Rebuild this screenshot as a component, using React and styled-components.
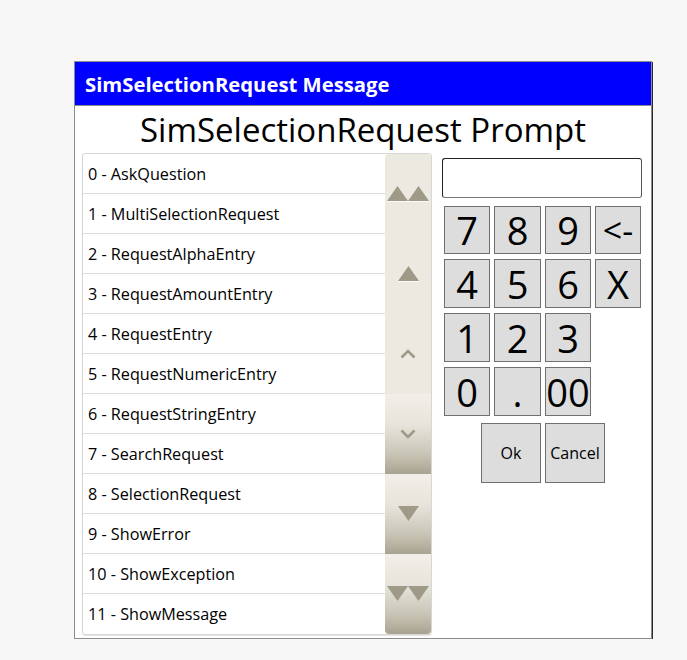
import React from "react";
import styled, { createGlobalStyle } from "styled-components";

const GlobalStyle = createGlobalStyle`
  html, body { margin: 0; padding: 0; background: #f7f7f7; }
  body { font-family: "Open Sans", "Noto Sans", sans-serif; }
`;

const Page = styled.div`
  padding: 61px 0 0 74px;
`;

const Dialog = styled.div`
  width: 576px;
  height: 576px;
  background: #ffffff;
  border: 1px solid #8c8c8c;
  box-shadow: 1px 1px 0 #2a2a2a;
  display: flex;
  flex-direction: column;
`;

const TitleBar = styled.div`
  height: 43px;
  background: #0000ff;
  border-bottom: 1px solid #8c8c8c;
  color: #ffffff;
  font-weight: 700;
  font-size: 20.3px;
  display: flex;
  align-items: center;
  padding-left: 10px;
`;

const Prompt = styled.div`
  height: 47px;
  display: flex;
  align-items: center;
  justify-content: center;
  font-size: 33px;
  color: #000;
`;

const Body = styled.div`
  display: flex;
  padding: 0 0 0 7px;
  gap: 10px;
`;

const List = styled.div`
  width: 348px;
  height: 480px;
  border: 1px solid #d6d6d6;
  border-radius: 3px;
  display: flex;
  box-shadow: 0 1px 1px #e4e4e4;
`;

const Rows = styled.div`
  flex: 1;
  display: flex;
  flex-direction: column;
`;

const Row = styled.div`
  height: 39px;
  border-bottom: 1px solid #dcdcdc;
  display: flex;
  align-items: center;
  padding-left: 5px;
  font-size: 16.2px;
  color: #000;
  &:last-child { border-bottom: none; }
`;

const ScrollBar = styled.div`
  width: 46px;
  display: flex;
  flex-direction: column;
  border-radius: 4px;
  overflow: hidden;
`;

const ScrollButton = styled.div`
  flex: 1;
  display: flex;
  align-items: center;
  justify-content: center;
  background: ${(p) =>
    p.$shaded
      ? "linear-gradient(to bottom, #f1efe8 0%, #e6e3da 40%, #c9c5b6 75%, #a8a290 100%)"
      : "#ece9e1"};
`;

const Keypad = styled.div`
  display: flex;
  flex-direction: column;
  padding-top: 5px;
`;

const Entry = styled.div`
  width: 198px;
  height: 38px;
  border: 1px solid #222;
  border-right-color: #555;
  border-bottom-color: #777;
  border-radius: 3px;
  background: #fff;
`;

const Grid = styled.div`
  display: grid;
  grid-template-columns: 46px 47px 46px 46px;
  grid-template-rows: 48px 49px 49px 49px;
  gap: 5px 4px;
  margin: 8px 0 0 2px;
`;

const Key = styled.button`
  box-sizing: border-box;
  margin: 0;
  padding: 0;
  background: #dddddd;
  border: 1px solid #707070;
  color: #000;
  font-family: "Open Sans", "Noto Sans", sans-serif;
  font-size: ${(p) => p.$size || 38}px;
  line-height: 1;
  display: flex;
  align-items: center;
  justify-content: center;
  cursor: pointer;
`;

const Actions = styled.div`
  display: flex;
  justify-content: center;
  gap: 4px;
  margin: 7px 0 0 2px;
  width: 198px;
  & > button {
    width: 60px;
    height: 60px;
  }
`;

const C = "#9f9a88";

const Tri = ({ down }) => (
  <svg width="21" height="16" viewBox="0 0 21 16">
    {down ? (
      <polygon points="0,0 21,0 10.5,15" fill={C} />
    ) : (
      <>
        <polygon points="10.5,0 21,15 0,15" fill={C} />
        <line x1="0" y1="15.5" x2="21" y2="15.5" stroke="#fbfaf6" strokeWidth="1" />
      </>
    )}
  </svg>
);

const DoubleTri = ({ down }) => (
  <svg width="42" height="16" viewBox="0 0 42 16">
    {down ? (
      <>
        <polygon points="0,0 21,0 10.5,15" fill={C} />
        <polygon points="21,0 42,0 31.5,15" fill={C} />
      </>
    ) : (
      <>
        <polygon points="10.5,0 21,15 0,15" fill={C} />
        <polygon points="31.5,0 42,15 21,15" fill={C} />
        <line x1="0" y1="15.5" x2="42" y2="15.5" stroke="#fbfaf6" strokeWidth="1" />
      </>
    )}
  </svg>
);

const Chevron = ({ down }) => (
  <svg width="16" height="10" viewBox="0 0 16 10">
    <polyline
      points={down ? "1.5,1.5 8,8 14.5,1.5" : "1.5,8.5 8,2 14.5,8.5"}
      fill="none"
      stroke={C}
      strokeWidth="2.6"
    />
  </svg>
);

const items = [
  "0 - AskQuestion",
  "1 - MultiSelectionRequest",
  "2 - RequestAlphaEntry",
  "3 - RequestAmountEntry",
  "4 - RequestEntry",
  "5 - RequestNumericEntry",
  "6 - RequestStringEntry",
  "7 - SearchRequest",
  "8 - SelectionRequest",
  "9 - ShowError",
  "10 - ShowException",
  "11 - ShowMessage",
];

const keys = [
  ["7", 38], ["8", 38], ["9", 38], ["<-", 34],
  ["4", 38], ["5", 38], ["6", 38], ["X", 38],
  ["1", 38], ["2", 38], ["3", 38], null,
  ["0", 38], [".", 38], ["00", 38], null,
];

export default function App() {
  return (
    <>
      <GlobalStyle />
      <Page>
        <Dialog>
          <TitleBar>SimSelectionRequest Message</TitleBar>
          <Prompt>SimSelectionRequest Prompt</Prompt>
          <Body>
            <List>
              <Rows>
                {items.map((t) => (
                  <Row key={t}>{t}</Row>
                ))}
              </Rows>
              <ScrollBar>
                <ScrollButton><DoubleTri /></ScrollButton>
                <ScrollButton><Tri /></ScrollButton>
                <ScrollButton><Chevron /></ScrollButton>
                <ScrollButton $shaded><Chevron down /></ScrollButton>
                <ScrollButton $shaded><Tri down /></ScrollButton>
                <ScrollButton $shaded><DoubleTri down /></ScrollButton>
              </ScrollBar>
            </List>
            <Keypad>
              <Entry />
              <Grid>
                {keys.map((k, i) =>
                  k ? (
                    <Key key={i} $size={k[1]}>{k[0]}</Key>
                  ) : (
                    <span key={i} />
                  )
                )}
              </Grid>
              <Actions>
                <Key $size={16}>Ok</Key>
                <Key $size={16}>Cancel</Key>
              </Actions>
            </Keypad>
          </Body>
        </Dialog>
      </Page>
    </>
  );
}
